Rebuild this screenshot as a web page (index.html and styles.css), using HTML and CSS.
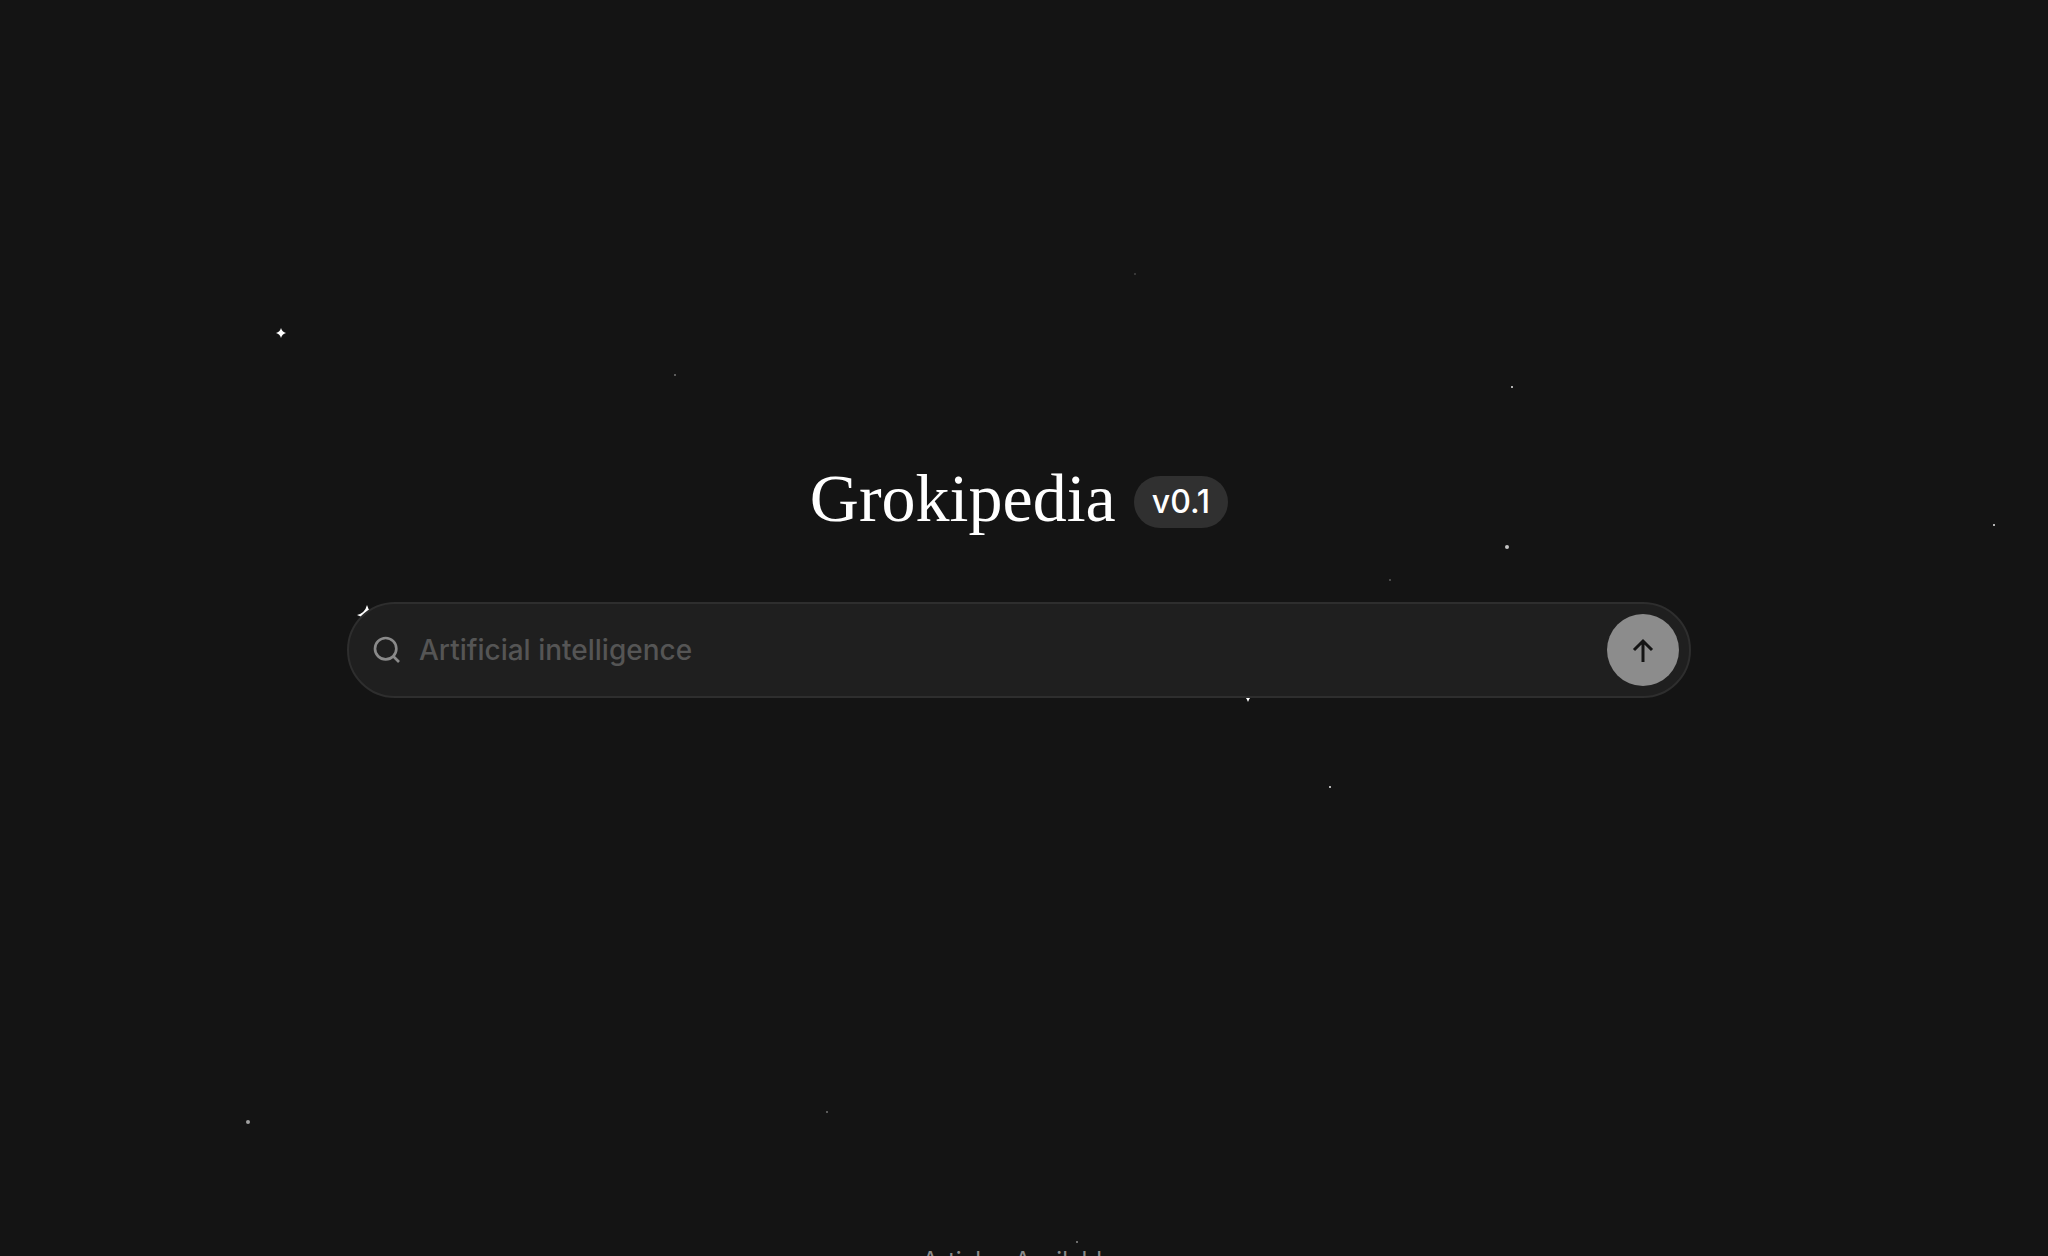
FILE: index.html
```html
<!DOCTYPE html>
<html lang="en">
<head>
  <meta charset="UTF-8" />
  <meta name="viewport" content="width=device-width, initial-scale=1.0" />
  <title>Grokipedia</title>
  <link rel="stylesheet" href="styles.css">
</head>
<body>
  <svg class="stars" aria-hidden="true">
    <defs>
      <symbol id="star" viewBox="-10 -10 20 20" overflow="visible">
        <path d="M0-10Q2-2 10 0Q2 2 0 10Q-2 2-10 0Q-2-2 0-10Z" />
      </symbol>
    </defs>
    <use href="#star" x="276" y="328" width="10" height="10" />
    <use href="#star" x="357" y="605" width="20" height="20" />
    <use href="#star" x="1241" y="688" width="14" height="14" />
    <circle cx="1507" cy="547" r="2" opacity="0.75" />
    <circle cx="248" cy="1122" r="2" opacity="0.6" />
    <circle cx="1512" cy="387" r="1" opacity="0.9" />
    <circle cx="1330" cy="787" r="1" opacity="0.9" />
    <circle cx="1994" cy="525" r="1" opacity="0.9" />
    <circle cx="675" cy="375" r="1" opacity="0.4" />
    <circle cx="1135" cy="274" r="1" opacity="0.2" />
    <circle cx="1390" cy="580" r="1" opacity="0.3" />
    <circle cx="827" cy="1112" r="1" opacity="0.4" />
    <circle cx="1077" cy="1242" r="1" opacity="0.5" />
  </svg>

  <main class="hero">
    <div class="brand">
      <h1>Grokipedia</h1>
      <span class="version">v0.1</span>
    </div>

    <form class="search">
      <label for="query" aria-label="Search">
        <svg class="search-icon" viewBox="0 0 24 24">
          <circle cx="11" cy="11" r="8" />
          <path d="M21 21l-4.3-4.3" />
        </svg>
      </label>
      <input type="text" id="query" placeholder="Artificial intelligence" />
      <button type="submit" aria-label="Submit search">
        <svg class="arrow-icon" viewBox="0 0 32 32">
          <path d="M16 28V7M7 16l9-9 9 9" />
        </svg>
      </button>
    </form>
  </main>

  <footer class="stats">Articles Available</footer>
</body>
</html>
```

FILE: styles.css
```css
* {
  box-sizing: border-box;
}
body {
  margin: 0;
  padding-right: 10px;
  height: 100vh;
  overflow: hidden;
  background-color: #141414;
  color: #fff;
  font-family: Inter, 'Liberation Sans', sans-serif;
}
.stars {
  position: absolute;
  top: 0;
  left: 0;
  width: 100%;
  height: 100%;
  fill: #fff;
}
.hero {
  position: relative;
  display: flex;
  flex-direction: column;
  align-items: center;
  justify-content: center;
  gap: 60px;
  height: 100vh;
  padding: 0 32px 96px;
}
.brand {
  display: flex;
  align-items: center;
  gap: 18px;
}
h1 {
  margin: 0;
  padding-bottom: 8px;
  font-family: 'Liberation Serif', 'Times New Roman', serif;
  font-size: 68px;
  font-weight: 400;
  line-height: 72px;
}
.version {
  padding: 0 18px;
  border-radius: 26px;
  background-color: #303030;
  font-size: 32px;
  font-weight: 500;
  line-height: 52px;
}
.search {
  display: flex;
  align-items: center;
  gap: 16px;
  width: 100%;
  max-width: 1344px;
  height: 96px;
  padding: 0 10px 0 22px;
  background-color: #1f1f1f;
  border: 2px solid #2e2e2e;
  border-radius: 48px;
}
.search label {
  display: flex;
}
.search input {
  flex: 1;
  min-width: 0;
  padding: 0;
  border: none;
  outline: none;
  background: none;
  color: #fff;
  font-family: inherit;
  font-size: 28px;
  font-weight: 500;
}
.search input::placeholder {
  color: #555;
}
.search button {
  display: flex;
  align-items: center;
  justify-content: center;
  width: 72px;
  height: 72px;
  padding: 0;
  border: none;
  border-radius: 50%;
  background-color: #8c8c8c;
  cursor: pointer;
}
.search-icon, .arrow-icon {
  width: 32px;
  height: 32px;
  fill: none;
  stroke: #8a8a8a;
  stroke-width: 2;
}
.arrow-icon {
  stroke: #141414;
  stroke-width: 3;
}
.stats {
  position: relative;
  margin-top: -11px;
  color: #8a8a8a;
  font-size: 24px;
  line-height: 32px;
  text-align: center;
}
```
